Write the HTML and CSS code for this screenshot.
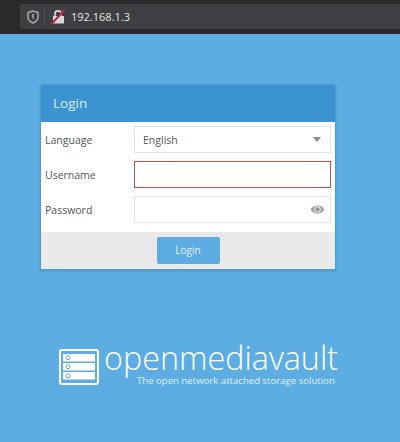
FILE: index.html
```html
<!DOCTYPE html>
<html>
<head>
<title>openmediavault</title>
<meta name="viewport" content="width=device-width, initial-scale=1.0">
<link rel="stylesheet" href="styles.css">
</head>
<body>
<div class="browser-bar">
  <div class="url-box">
    <svg class="shield" width="12" height="14" viewBox="0 0 12 14">
      <path d="M6 1 L11 2.5 V7 C11 10 8.5 12 6 13 C3.5 12 1 10 1 7 V2.5 Z" fill="none" stroke="#a8a8a8" stroke-width="1.5"/>
      <rect x="5.2" y="4" width="1.6" height="4.5" fill="#a8a8a8"/>
    </svg>
    <span class="divider"></span>
    <svg class="lock" width="14" height="16" viewBox="0 0 14 16">
      <path d="M4 7 V4.5 C4 1 10 1 10 4.5 V7" fill="none" stroke="#d8d8d8" stroke-width="1.6"/>
      <rect x="2" y="7" width="11" height="7.5" fill="#d8d8d8"/>
      <line x1="0.5" y1="15" x2="13.5" y2="1" stroke="#b3263c" stroke-width="2"/>
    </svg>
    <span class="url">192.168.1.3</span>
  </div>
</div>

<div class="page">
  <div class="card">
    <div class="card-head">Login</div>
    <div class="card-body">
      <div class="row">
        <label>Language</label>
        <div class="field">
          <span>English</span>
          <span class="caret"></span>
        </div>
      </div>
      <div class="row">
        <label>Username</label>
        <div class="field invalid"></div>
      </div>
      <div class="row">
        <label>Password</label>
        <div class="field eye-field">
          <span></span>
          <svg width="15" height="11" viewBox="0 0 15 11">
            <path d="M0.5 5.5 C3 0 12 0 14.5 5.5 C12 11 3 11 0.5 5.5 Z" fill="#a3a3a3"/>
            <circle cx="7.5" cy="5.5" r="3.2" fill="#e8e8e8"/>
            <circle cx="7.5" cy="5.5" r="2.2" fill="#999"/>
          </svg>
        </div>
      </div>
    </div>
    <div class="card-foot">
      <button class="btn">Login</button>
    </div>
  </div>

  <div class="logo">
    <svg class="logo-mark" width="40" height="36" viewBox="0 0 40 36">
      <rect x="1" y="1" width="38" height="34" rx="2" fill="none" stroke="#fff" stroke-width="2"/>
      <rect x="4" y="5" width="32" height="7.5" fill="#fff"/>
      <rect x="4" y="14" width="32" height="7.5" fill="#fff"/>
      <rect x="4" y="23" width="32" height="7.5" fill="#fff"/>
      <circle cx="9" cy="8.7" r="2" fill="none" stroke="#5dade2"/>
      <circle cx="9" cy="17.7" r="2" fill="none" stroke="#5dade2"/>
      <circle cx="9" cy="26.7" r="2" fill="none" stroke="#5dade2"/>
    </svg>
    <div class="logo-text">
      <div class="logo-name">openmediavault</div>
      <div class="logo-tag">The open network attached storage solution</div>
    </div>
  </div>
</div>
</body>
</html>
```

FILE: styles.css
```css
body {
  margin: 0;
  height: 442px;
  overflow: hidden;
  background: #5dade2;
  font-family: "Open Sans", sans-serif;
  color: #555;
}

.browser-bar {
  height: 34px;
  box-sizing: border-box;
  padding: 4px 0 5px 20px;
  background: #2a2a2d;
}

.url-box {
  height: 25px;
  display: flex;
  align-items: center;
  padding-left: 6px;
  background: #3f3f43;
  border-radius: 2px 0 0 2px;
}

.shield {
  margin-left: 1px;
}

.divider {
  width: 1px;
  height: 17px;
  margin: 0 5px 0 5px;
  background: #56565a;
}

.lock {
  margin-left: 1px;
}

.url {
  margin-left: 6px;
  font-size: 11px;
  color: #e4e4e4;
}

.page {
  padding: 50px 64px 0 40px;
}

.card {
  background: #fff;
  border: 1px solid #4a9cd4;
  box-shadow: 0 1px 2px rgba(0, 0, 0, 0.15);
}

.card-head {
  height: 37px;
  padding-left: 12px;
  line-height: 36px;
  font-size: 13.5px;
  color: #d6ecfa;
  background: #3b94d1;
}

.card-body {
  padding: 4px 4px 9px;
  display: flex;
  flex-direction: column;
  gap: 8px;
}

.row {
  display: flex;
  align-items: center;
}

.row label {
  width: 89px;
  font-size: 10.5px;
}

.field {
  flex: 1;
  height: 27px;
  box-sizing: border-box;
  padding: 0 8px;
  display: flex;
  align-items: center;
  justify-content: space-between;
  border: 1px solid #e3e3e3;
  font-size: 10.5px;
}

.eye-field {
  padding-right: 5px;
}

.invalid {
  border-color: #c9503f;
}

.caret {
  width: 0;
  height: 0;
  margin-right: 1px;
  border-left: 4px solid transparent;
  border-right: 4px solid transparent;
  border-top: 5px solid #8c8c8c;
}

.card-foot {
  height: 36px;
  padding-bottom: 1px;
  display: flex;
  justify-content: center;
  align-items: center;
  background: #e9e9e9;
}

.btn {
  width: 63px;
  height: 27px;
  padding: 0;
  border: 0;
  border-radius: 2px;
  background: #5dade2;
  color: #e3f1fb;
  font-family: inherit;
  font-size: 10px;
}

.logo {
  margin-top: 79px;
  margin-left: 19px;
  display: flex;
  align-items: flex-start;
  gap: 5px;
  color: #fff;
}

.logo-mark {
  flex: none;
}

.logo-name {
  margin-top: -8px;
  font-family: "Open Sans", sans-serif;
  font-weight: 300;
  font-size: 32.3px;
  line-height: 32px;
  white-space: nowrap;
}

.logo-tag {
  margin-top: 2px;
  margin-left: 33px;
  font-size: 9.6px;
  line-height: 11px;
  white-space: nowrap;
  color: #dff0fb;
}
```
